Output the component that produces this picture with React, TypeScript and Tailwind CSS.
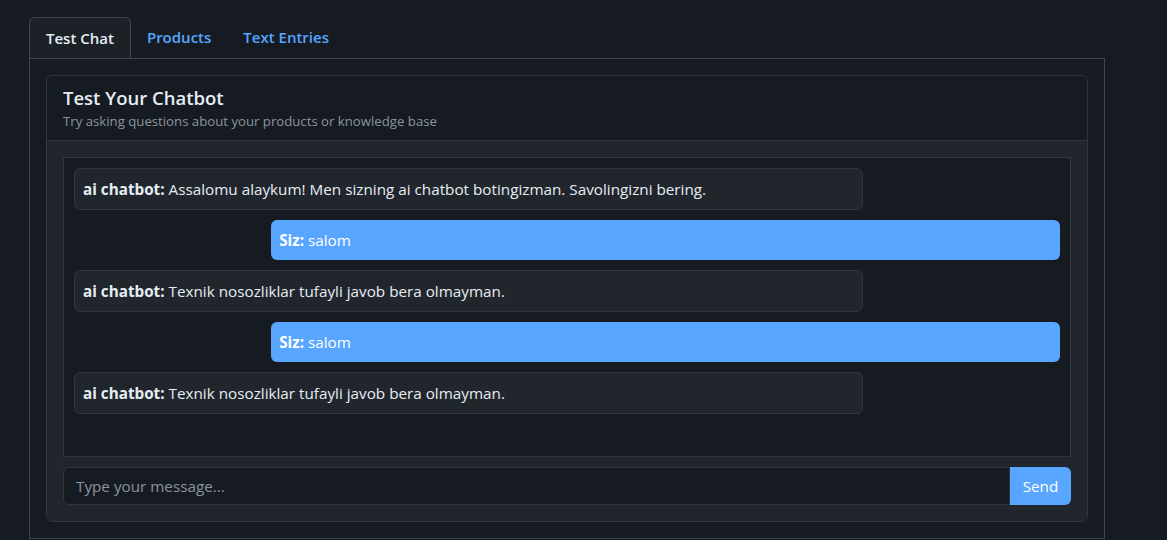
import React from "react";

const messages = [
  { from: "bot", text: "Assalomu alaykum! Men sizning ai chatbot botingizman. Savolingizni bering." },
  { from: "user", text: "salom" },
  { from: "bot", text: "Texnik nosozliklar tufayli javob bera olmayman." },
  { from: "user", text: "salom" },
  { from: "bot", text: "Texnik nosozliklar tufayli javob bera olmayman." },
];

export default function App() {
  return (
    <div
      className="min-h-[540px] w-full bg-[#161b22] text-[#c9d1d9] pt-[17px] pl-[29px]"
      style={{ fontFamily: '"Segoe UI", "Open Sans", "Noto Sans", sans-serif' }}
    >
      <div className="w-[1076px]">
        <div className="flex h-[41px] items-stretch">
          <div className="flex items-center px-4 rounded-t-md border border-b-0 border-[#3d444d] bg-[#1c2128] text-[15px] font-semibold text-[#e6edf3]">
            Test Chat
          </div>
          <div className="flex items-center px-4 text-[15px] font-semibold text-[#58a6ff]">Products</div>
          <div className="flex items-center px-4 text-[15px] font-semibold text-[#58a6ff]">Text Entries</div>
        </div>
        <div className="border border-[#3d444d] p-4 h-[481px]">
          <div className="rounded-md border border-[#30363d] overflow-hidden">
            <div className="h-[65px] px-4 pt-[10px] border-b border-[#30363d] bg-[#161b22]">
              <div className="text-[18.5px] font-semibold text-[#e6edf3] leading-[24px]">Test Your Chatbot</div>
              <div className="text-[13.2px] text-[#8b949e] leading-[18px] mt-[2px]">
                Try asking questions about your products or knowledge base
              </div>
            </div>
            <div className="bg-[#21262d] p-4">
              <div className="h-[300px] border border-[#30363d] bg-[#161b22] p-[10px] overflow-hidden">
                {messages.map((m, i) =>
                  m.from === "bot" ? (
                    <div key={i} className="mb-[10px] flex justify-start">
                      <div className="w-[80%] rounded-md border border-[#30363d] bg-[#21262d] px-2 py-[8px] text-[15.25px] leading-[24px] text-[#e6edf3]">
                        <span className="font-bold">ai chatbot:</span> {m.text}
                      </div>
                    </div>
                  ) : (
                    <div key={i} className="mb-[10px] flex justify-end">
                      <div className="w-[80%] rounded-md bg-[#58a6ff] px-2 py-[8px] text-[15.25px] leading-[24px] text-white">
                        <span className="font-bold">Siz:</span> {m.text}
                      </div>
                    </div>
                  )
                )}
              </div>
              <div className="mt-[10px] flex h-[38px]">
                <div className="flex-1 flex items-center rounded-l-md border border-[#30363d] bg-[#161b22] px-3 text-[15.25px] text-[#8b949e]">
                  Type your message...
                </div>
                <button className="w-[61px] rounded-r-md bg-[#58a6ff] text-[15.25px] text-white">Send</button>
              </div>
            </div>
          </div>
        </div>
      </div>
    </div>
  );
}
